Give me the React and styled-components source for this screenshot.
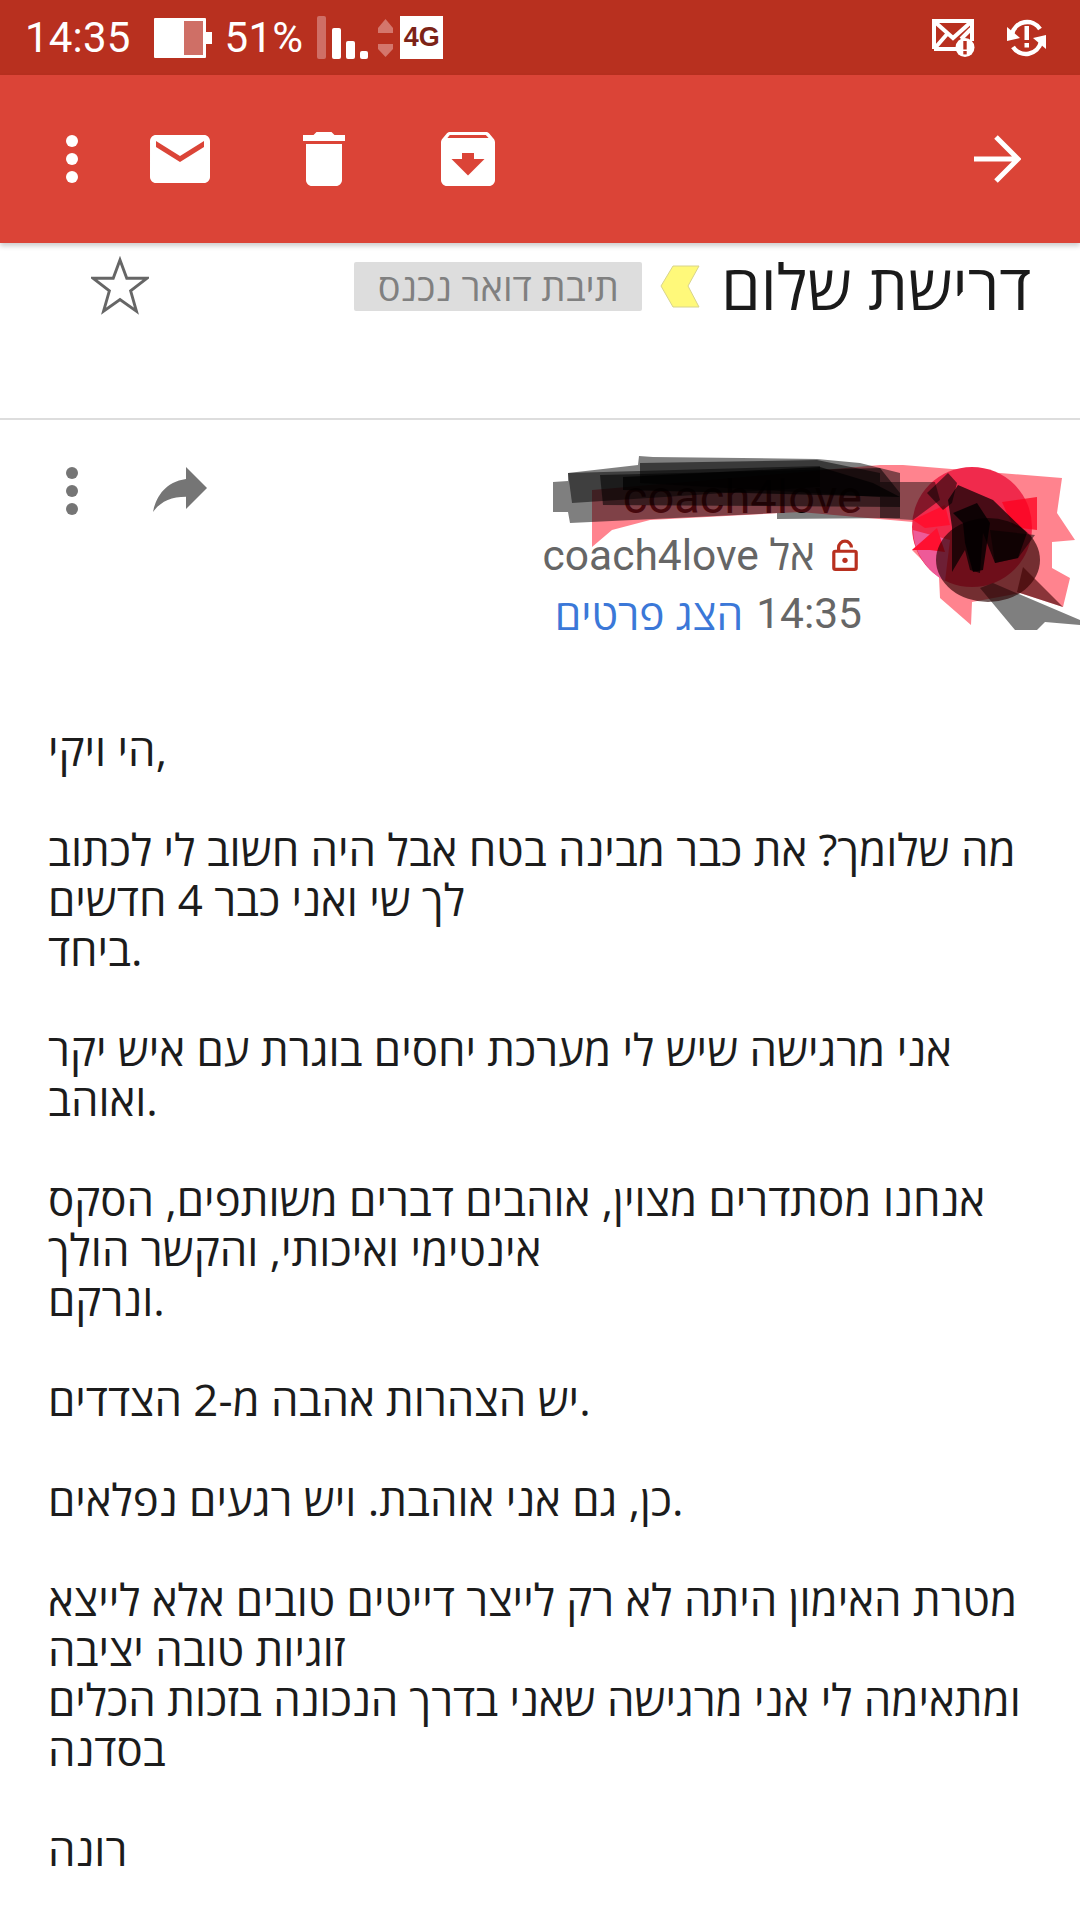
import React from 'react';
import styled, { createGlobalStyle } from 'styled-components';

const GlobalStyle = createGlobalStyle`
  *, *::before, *::after {
    box-sizing: border-box;
  }
  html, body {
    margin: 0;
    padding: 0;
    background: #fff;
  }
`;

const Page = styled.div`
  width: 1080px;
  height: 1920px;
  overflow: hidden;
  position: relative;
  background: #fff;
  font-family: Roboto, "Open Sans", "Liberation Sans", sans-serif;
`;

const StatusBar = styled.div`
  height: 75px;
  background: #b8301f;
  display: flex;
  align-items: center;
  padding: 0 34px 0 25px;
  color: #fff;
`;

const StatusText = styled.span`
  font-size: 42px;
  font-weight: 400;
  letter-spacing: 0.2px;
  margin-left: ${(p) => p.$gap || 0}px;
`;

const StatusIcon = styled.svg`
  display: block;
  flex: none;
  margin-left: ${(p) => p.$gap || 0}px;
`;

const NetBadge = styled.span`
  width: 43px;
  height: 43px;
  margin-left: 7px;
  background: #fff;
  color: #7c2317;
  font: bold 27px "Liberation Sans", sans-serif;
  display: flex;
  align-items: center;
  justify-content: center;
`;

const StatusRight = styled.div`
  margin-left: auto;
  display: flex;
  align-items: center;
`;

const Toolbar = styled.div`
  height: 168px;
  background: #db4437;
  display: flex;
  align-items: center;
  padding: 0 59px 0 66px;
  box-shadow: 0 3px 5px rgba(0, 0, 0, 0.2);
  position: relative;
`;

const ToolIcon = styled.svg`
  display: block;
  flex: none;
  fill: #fff;
  margin-left: ${(p) => p.$gap || 0}px;
`;

const ForwardArrow = styled.svg`
  display: block;
  margin-left: auto;
  fill: none;
  stroke: #fff;
  stroke-width: 5;
`;

const SubjectRow = styled.div`
  height: 177px;
  display: flex;
  align-items: flex-start;
  padding: 13px 49px 0 91px;
  border-bottom: 2px solid #dddddd;
`;

const Star = styled.svg`
  display: block;
  fill: none;
  stroke: #666;
  stroke-width: 3;
`;

const SubjectRight = styled.div`
  margin-left: auto;
  display: flex;
  align-items: center;
`;

const InboxChip = styled.span`
  width: 288px;
  height: 49px;
  background: #dddddd;
  border-radius: 2px;
  color: #808080;
  font: 38px "Open Sans", "Liberation Sans", sans-serif;
  direction: rtl;
  display: flex;
  align-items: center;
  justify-content: center;
`;

const Tag = styled.svg`
  display: block;
  margin: 0 21px 0 18px;
`;

const Subject = styled.h1`
  margin: 0;
  font: 400 63px "Open Sans", "Liberation Sans", sans-serif;
  line-height: 60px;
  color: #1a1a1a;
  direction: rtl;
`;

const SenderRow = styled.div`
  height: 304px;
  display: flex;
  align-items: flex-start;
  padding: 47px 218px 0 66px;
`;

const ActionIcon = styled.svg`
  display: block;
  flex: none;
  fill: #757575;
  margin-left: ${(p) => p.$gap || 0}px;
`;

const SenderInfo = styled.div`
  margin-left: auto;
  display: flex;
  flex-direction: column;
  align-items: flex-end;
  font-size: 42.5px;
  line-height: 58px;
  color: #666;
  margin-top: 2px;
`;

const SenderName = styled.div`
  color: #000;
  font-size: 47px;
  line-height: 56px;
`;

const MetaLine = styled.div`
  display: flex;
  align-items: center;
  gap: ${(p) => p.$gap || 0}px;
  padding-right: ${(p) => p.$inset || 0}px;
`;

const HebrewSpan = styled.span`
  font-family: "Open Sans", "Liberation Sans", sans-serif;
  color: ${(p) => p.$color || 'inherit'};
  direction: rtl;
`;

const Scribble = styled.svg`
  position: absolute;
  left: 540px;
  top: 440px;
  pointer-events: none;
`;

const Body = styled.div`
  padding: 0 48px;
  font: 43.8px/50px "Open Sans", "Liberation Sans", sans-serif;
  color: #1c1c1c;
  text-align: left;
`;

const Paragraph = styled.p`
  margin: 0 0 50px;
`;

const Line = styled.div`
  white-space: nowrap;
`;

const paragraphs = [
  ['הי ויקי,'],
  ['מה שלומך? את כבר מבינה בטח אבל היה חשוב לי לכתוב', 'לך שי ואני כבר 4 חדשים', 'ביחד.'],
  ['אני מרגישה שיש לי מערכת יחסים בוגרת עם איש יקר', 'ואוהב.'],
  ['אנחנו מסתדרים מצוין, אוהבים דברים משותפים, הסקס', 'אינטימי ואיכותי, והקשר הולך', 'ונרקם.'],
  ['יש הצהרות אהבה מ-2 הצדדים.'],
  ['כן, גם אני אוהבת. ויש רגעים נפלאים.'],
  ['מטרת האימון היתה לא רק לייצר דייטים טובים אלא לייצא', 'זוגיות טובה יציבה', 'ומתאימה לי אני מרגישה שאני בדרך הנכונה בזכות הכלים', 'בסדנה'],
  ['רונה'],
];

const MoreVert = ({ as: Comp, gap }) => (
  <Comp $gap={gap} width="12" height="48" viewBox="0 0 12 48">
    <circle cx="6" cy="6" r="6" />
    <circle cx="6" cy="24" r="6" />
    <circle cx="6" cy="42" r="6" />
  </Comp>
);

const App = () => (
  <Page>
    <GlobalStyle />
    <StatusBar>
      <StatusText>14:35</StatusText>
      <StatusIcon $gap={23} width="58" height="40" viewBox="0 0 58 40">
        <rect x="0" y="0" width="52" height="40" rx="1" fill="#fff" />
        <rect x="30" y="3" width="19" height="34" fill="#cf6f66" />
        <rect x="52" y="14" width="6" height="12" fill="#fff" />
      </StatusIcon>
      <StatusText $gap={13}>51%</StatusText>
      <StatusIcon $gap={14} width="51" height="43" viewBox="0 0 51 43">
        <rect x="0" y="0" width="9" height="43" rx="2" fill="#cf6f66" />
        <rect x="15" y="12" width="9" height="31" rx="2" fill="#fff" />
        <rect x="29" y="25" width="9" height="18" rx="2" fill="#fff" />
        <rect x="43" y="35" width="8" height="8" rx="2" fill="#fff" />
      </StatusIcon>
      <StatusIcon $gap={10} width="15" height="38" viewBox="0 0 15 38">
        <polygon points="7.5,0 15,9 15,14 0,14 0,9" fill="#d4766c" />
        <polygon points="0,25 15,25 15,30 7.5,38 0,30" fill="#d4766c" />
      </StatusIcon>
      <NetBadge>4G</NetBadge>
      <StatusRight>
        <StatusIcon width="43" height="38" viewBox="0 0 43 38">
          <path d="M2 30V2h38v20M2 30h24" fill="none" stroke="#fff" strokeWidth="4" />
          <path d="M3 3l18 16L39 3M3 29l13-15M39 10 29 20" fill="none" stroke="#fff" strokeWidth="4" />
          <circle cx="33" cy="28.5" r="9.5" fill="#fff" />
          <rect x="31.3" y="22" width="3.4" height="8.5" fill="#b8301f" />
          <rect x="31.3" y="32" width="3.4" height="3.4" fill="#b8301f" />
        </StatusIcon>
        <StatusIcon $gap={32} width="39" height="38" viewBox="0 0 39 38">
          <path d="M5 15A15.5 15.5 0 0 1 33 10" fill="none" stroke="#fff" strokeWidth="4.5" />
          <path d="M34 23A15.5 15.5 0 0 1 6 28" fill="none" stroke="#fff" strokeWidth="4.5" />
          <polygon points="0,8 13,19 0,22" fill="#fff" />
          <polygon points="39,30 26,19 39,16" fill="#fff" />
          <rect x="17.5" y="7" width="4.5" height="14" fill="#fff" />
          <rect x="17.5" y="24" width="4.5" height="4.5" fill="#fff" />
        </StatusIcon>
      </StatusRight>
    </StatusBar>

    <Toolbar>
      <MoreVert as={ToolIcon} />
      <ToolIcon $gap={72} width="60" height="48" viewBox="2 4 20 16">
        <path d="M20 4H4c-1.1 0-1.99.9-1.99 2L2 18c0 1.1.9 2 2 2h16c1.1 0 2-.9 2-2V6c0-1.1-.9-2-2-2zm0 4l-8 5-8-5V6l8 5 8-5v2z" />
      </ToolIcon>
      <ToolIcon $gap={93} width="42" height="54" viewBox="5 3 14 18">
        <path d="M6 19c0 1.1.9 2 2 2h8c1.1 0 2-.9 2-2V7H6v12zM19 4h-3.5l-1-1h-5l-1 1H5v2h14V4z" />
      </ToolIcon>
      <ToolIcon $gap={96} width="54" height="54" viewBox="3 3 18 18">
        <path d="M20.54 5.23l-1.39-1.68C18.88 3.21 18.47 3 18 3H6c-.47 0-.88.21-1.16.55L3.46 5.23C3.17 5.57 3 6.02 3 6.5V19c0 1.1.9 2 2 2h14c1.1 0 2-.9 2-2V6.5c0-.48-.17-.93-.46-1.27zM12 17.5L6.5 12H10v-2h4v2h3.5L12 17.5zM5.12 5l.81-1h12l.94 1H5.12z" />
      </ToolIcon>
      <ForwardArrow width="47" height="48" viewBox="0 0 47 48">
        <path d="M0 24h44M22 2l22 22-22 22" />
      </ForwardArrow>
    </Toolbar>

    <SubjectRow>
      <Star width="58" height="60" viewBox="0 0 60 60">
        <polygon points="30,3 37,22 58,22 41,35 47,56 30,44 13,56 19,35 2,22 23,22" />
      </Star>
      <SubjectRight>
        <InboxChip>תיבת דואר נכנס</InboxChip>
        <Tag width="40" height="43" viewBox="0 0 40 43">
          <polygon points="1,21 13,1 39,1 28,21 39,42 13,42" fill="#fff97a" stroke="#d8d48c" />
        </Tag>
        <Subject>דרישת שלום</Subject>
      </SubjectRight>
    </SubjectRow>

    <SenderRow>
      <MoreVert as={ActionIcon} />
      <ActionIcon $gap={75} width="54" height="45" viewBox="3 5 18 15">
        <path transform="translate(24 0) scale(-1 1)" d="M10 9V5l-7 7 7 7v-4.1c5 0 8.5 1.6 11 5.1-1-5-4-10-11-11z" />
      </ActionIcon>
      <SenderInfo>
        <SenderName>coach4love</SenderName>
        <MetaLine $gap={17} $inset={4}>
          <span>coach4love <HebrewSpan>אל</HebrewSpan></span>
          <svg width="26" height="32" viewBox="0 0 24 30" fill="none" stroke="#b8301f" strokeWidth="3">
            <rect x="1.5" y="11.5" width="21" height="17" rx="1.5" />
            <path d="M6 11V8a6 6 0 0 1 12 0" />
            <circle cx="12" cy="20" r="2.5" fill="#b8301f" stroke="none" />
          </svg>
        </MetaLine>
        <MetaLine $gap={13}>
          <HebrewSpan $color="#3b78d8">הצג פרטים</HebrewSpan>
          <span>14:35</span>
        </MetaLine>
      </SenderInfo>
    </SenderRow>

    <Body>
      {paragraphs.map((lines, i) => (
        <Paragraph key={i}>
          {lines.map((line, j) => (
            <Line key={j}>{line}</Line>
          ))}
        </Paragraph>
      ))}
    </Body>

    {/* hand-drawn redaction over the sender name and avatar, in page coordinates */}
    <Scribble width="540" height="200" viewBox="540 440 540 200">
      <polygon points="592,490 880,465 903,465 1062,478 1057,513 1075,540 1052,542 1052,568 1070,578 1063,607 1020,593 972,602 971,625 940,598 939,577 912,550 937,528 913,522 800,512 650,520 612,530 592,547" fill="rgba(255,30,50,0.55)" />
      <circle cx="972" cy="527" r="60" fill="#f02a4c" />
      <path d="M913 530A60 60 0 0 0 945 581L950 540Z" fill="#ee5a98" />
      <polygon points="912,550 937,528 945,552 930,550" fill="#ff1030" />
      <polygon points="913,520 945,505 950,525 925,528" fill="#ff1030" />
      <polygon points="1002,502 1037,497 1037,530 1013,527" fill="rgba(255,0,30,0.75)" />
      <polygon points="553,482 568,481 568,473 638,465 639,456 653,457 817,459 860,463 900,473 900,518 777,519 777,513 570,523 568,512 553,512" fill="rgba(0,0,0,0.5)" />
      <polygon points="568,473 820,466 820,487 572,503" fill="rgba(0,0,0,0.5)" />
      <polygon points="600,475 880,468 900,493 900,507 603,505" fill="rgba(0,0,0,0.55)" />
      <polygon points="640,463 817,460 880,473 880,497 640,483" fill="rgba(0,0,0,0.55)" />
      <polygon points="623,477 820,467 873,483 900,497 623,490" fill="rgba(0,0,0,0.7)" />
      <polygon points="880,482 935,482 940,500 913,520 880,518" fill="rgba(0,0,0,0.45)" />
      <polygon points="980,588 993,583 1080,620 1080,625 1045,622 1037,630 1015,630 990,600" fill="rgba(0,0,0,0.5)" />
      <ellipse cx="988" cy="560" rx="52" ry="42" fill="rgba(40,0,0,0.65)" />
      <polygon points="1023,567 1063,607 1017,592" fill="rgba(60,0,0,0.6)" />
      <polygon points="927,493 948,473 957,483 952,503 943,510" fill="rgba(0,0,0,0.55)" />
      <polygon points="948,500 958,485 993,500 1027,533 1018,558 995,563 983,533 980,573 970,570 965,550 952,572 952,527" fill="rgba(0,0,0,0.7)" />
      <polygon points="953,513 977,503 990,523 983,570 973,572 965,543 963,523" fill="rgba(0,0,0,0.8)" />
      <polygon points="990,530 1035,535 1018,558 995,563" fill="rgba(0,0,0,0.5)" />
    </Scribble>
  </Page>
);

export default App;
